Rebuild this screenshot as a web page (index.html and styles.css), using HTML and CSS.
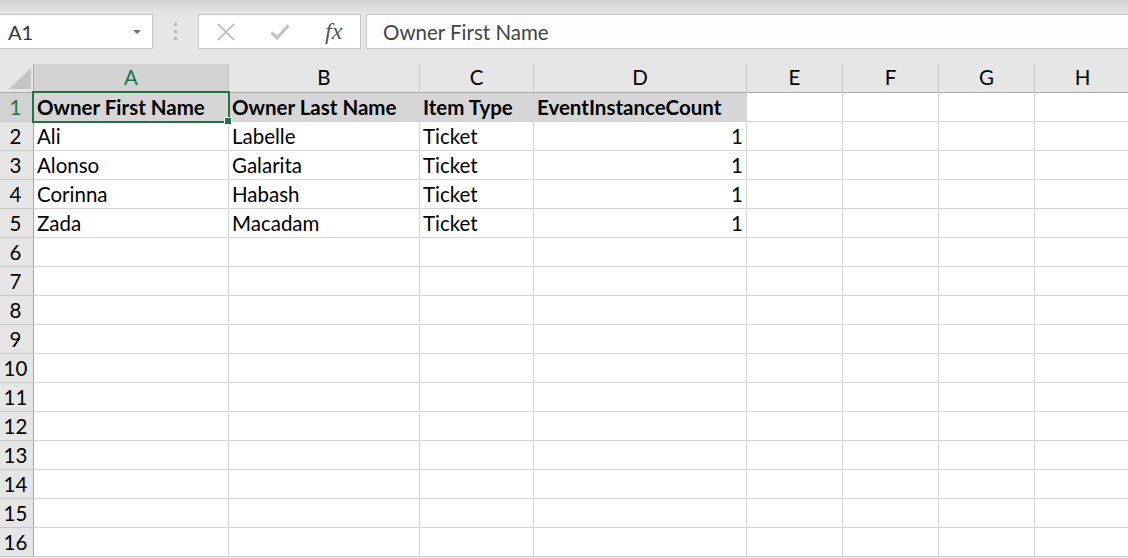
FILE: index.html
```html
<!DOCTYPE html>
<html lang="en">
<head>
  <meta charset="UTF-8">
  <title>Book1 - Excel</title>
  <link rel="stylesheet" href="styles.css">
</head>
<body>
  <div class="chrome-fade"></div>

  <!-- name box + formula bar -->
  <div class="formula-bar">
    <div class="name-box">
      <span>A1</span>
      <svg class="drop" width="8" height="4" viewBox="0 0 8 4"><path d="M0 0h8L4 4z" fill="#707070"/></svg>
    </div>
    <div class="grip"><i></i><i></i><i></i></div>
    <div class="fx-buttons">
      <svg class="btn" width="18" height="18" viewBox="0 0 18 18"><path d="M1 1L17 17M17 1L1 17" stroke="#b4b4b4" stroke-width="1.6" fill="none"/></svg>
      <svg class="btn" width="20" height="16" viewBox="0 0 20 16"><path d="M1.5 8.5L7 14L18.5 1.5" stroke="#c2c2c2" stroke-width="3" fill="none"/></svg>
      <span class="fx">fx</span>
    </div>
    <div class="formula-input">Owner First Name</div>
  </div>

  <!-- worksheet -->
  <div class="sheet">
    <div class="row">
      <div class="c corner"><svg width="22" height="21" viewBox="0 0 22 21"><path d="M22 0V21H0z" fill="#c4c4c4"/></svg></div>
      <div class="c ch sel">A</div>
      <div class="c ch">B</div>
      <div class="c ch">C</div>
      <div class="c ch">D</div>
      <div class="c ch">E</div>
      <div class="c ch">F</div>
      <div class="c ch">G</div>
      <div class="c ch">H</div>
    </div>
    <div class="row">
      <div class="c rh sel">1</div>
      <div class="c hd active">Owner First Name</div>
      <div class="c hd">Owner Last Name</div>
      <div class="c hd">Item Type</div>
      <div class="c hd">EventInstanceCount</div>
      <div class="c"></div><div class="c"></div><div class="c"></div><div class="c"></div>
    </div>
    <div class="row">
      <div class="c rh">2</div>
      <div class="c">Ali</div>
      <div class="c">Labelle</div>
      <div class="c">Ticket</div>
      <div class="c num">1</div>
      <div class="c"></div><div class="c"></div><div class="c"></div><div class="c"></div>
    </div>
    <div class="row">
      <div class="c rh">3</div>
      <div class="c">Alonso</div>
      <div class="c">Galarita</div>
      <div class="c">Ticket</div>
      <div class="c num">1</div>
      <div class="c"></div><div class="c"></div><div class="c"></div><div class="c"></div>
    </div>
    <div class="row">
      <div class="c rh">4</div>
      <div class="c">Corinna</div>
      <div class="c">Habash</div>
      <div class="c">Ticket</div>
      <div class="c num">1</div>
      <div class="c"></div><div class="c"></div><div class="c"></div><div class="c"></div>
    </div>
    <div class="row">
      <div class="c rh">5</div>
      <div class="c">Zada</div>
      <div class="c">Macadam</div>
      <div class="c">Ticket</div>
      <div class="c num">1</div>
      <div class="c"></div><div class="c"></div><div class="c"></div><div class="c"></div>
    </div>
    <div class="row"><div class="c rh">6</div><div class="c"></div><div class="c"></div><div class="c"></div><div class="c"></div><div class="c"></div><div class="c"></div><div class="c"></div><div class="c"></div></div>
    <div class="row"><div class="c rh">7</div><div class="c"></div><div class="c"></div><div class="c"></div><div class="c"></div><div class="c"></div><div class="c"></div><div class="c"></div><div class="c"></div></div>
    <div class="row"><div class="c rh">8</div><div class="c"></div><div class="c"></div><div class="c"></div><div class="c"></div><div class="c"></div><div class="c"></div><div class="c"></div><div class="c"></div></div>
    <div class="row"><div class="c rh">9</div><div class="c"></div><div class="c"></div><div class="c"></div><div class="c"></div><div class="c"></div><div class="c"></div><div class="c"></div><div class="c"></div></div>
    <div class="row"><div class="c rh">10</div><div class="c"></div><div class="c"></div><div class="c"></div><div class="c"></div><div class="c"></div><div class="c"></div><div class="c"></div><div class="c"></div></div>
    <div class="row"><div class="c rh">11</div><div class="c"></div><div class="c"></div><div class="c"></div><div class="c"></div><div class="c"></div><div class="c"></div><div class="c"></div><div class="c"></div></div>
    <div class="row"><div class="c rh">12</div><div class="c"></div><div class="c"></div><div class="c"></div><div class="c"></div><div class="c"></div><div class="c"></div><div class="c"></div><div class="c"></div></div>
    <div class="row"><div class="c rh">13</div><div class="c"></div><div class="c"></div><div class="c"></div><div class="c"></div><div class="c"></div><div class="c"></div><div class="c"></div><div class="c"></div></div>
    <div class="row"><div class="c rh">14</div><div class="c"></div><div class="c"></div><div class="c"></div><div class="c"></div><div class="c"></div><div class="c"></div><div class="c"></div><div class="c"></div></div>
    <div class="row"><div class="c rh">15</div><div class="c"></div><div class="c"></div><div class="c"></div><div class="c"></div><div class="c"></div><div class="c"></div><div class="c"></div><div class="c"></div></div>
    <div class="row"><div class="c rh">16</div><div class="c"></div><div class="c"></div><div class="c"></div><div class="c"></div><div class="c"></div><div class="c"></div><div class="c"></div><div class="c"></div></div>
  </div>
</body>
</html>
```

FILE: styles.css
```css
body {
  margin: 0;
  width: 1128px;
  height: 558px;
  overflow: hidden;
  background: #e6e6e6;
  font-family: Lato, "Liberation Sans", sans-serif;
  color: #000;
}

.chrome-fade {
  height: 14px;
  background: linear-gradient(#d0d0d0, #e6e6e6);
}

/* formula bar */
.formula-bar {
  display: flex;
  height: 35px;
  margin-bottom: 15px;
}
.name-box {
  width: 153px;
  box-sizing: border-box;
  border: 1px solid #c6c6c6;
  border-left: none;
  background: #fff;
  display: flex;
  align-items: center;
  justify-content: space-between;
  padding: 0 11px 0 8px;
  font-size: 20px;
  color: #333;
}
.grip {
  width: 45px;
  display: flex;
  flex-direction: column;
  align-items: center;
  justify-content: center;
  gap: 4px;
}
.grip i {
  width: 3px;
  height: 3px;
  background: #b8b8b8;
}
.fx-buttons {
  width: 163px;
  box-sizing: border-box;
  border: 1px solid #c6c6c6;
  background: #fff;
  display: flex;
  align-items: center;
  padding: 0 0 0 18px;
  gap: 35px;
}
.fx {
  font-family: "Liberation Serif", serif;
  font-style: italic;
  font-size: 24px;
  color: #555;
}
.formula-input {
  flex: 1;
  margin-left: 5px;
  border: 1px solid #c6c6c6;
  border-right: none;
  background: #fdfdfd;
  display: flex;
  align-items: center;
  padding-left: 16px;
  font-size: 20.5px;
  color: #444;
}

/* worksheet */
.sheet {
  background: #fff;
}
.row {
  display: grid;
  grid-template-columns: 34px 195px 191px 114px 213px 96px 96px 96px 96px;
}
.c {
  height: 29px;
  box-sizing: border-box;
  border-right: 1px solid #d4d4d4;
  border-bottom: 1px solid #d4d4d4;
  padding: 0 3px 4px 3px;
  display: flex;
  align-items: flex-end;
  font-size: 20.5px;
  line-height: 1;
  white-space: nowrap;
  overflow: hidden;
}
.num {
  justify-content: flex-end;
}
.corner {
  background: #e6e6e6;
  border-right-color: #a8a8a8;
  border-bottom-color: #a8a8a8;
  justify-content: flex-end;
  padding: 0 2px 3px 0;
}
.ch {
  background: #e6e6e6;
  border-right-color: #c8c8c8;
  border-bottom-color: #a8a8a8;
  justify-content: center;
  padding-bottom: 5px;
}
.rh {
  background: #e6e6e6;
  border-right-color: #a8a8a8;
  border-bottom-color: #c8c8c8;
  justify-content: center;
  padding: 0 2px 4px 0;
}
.ch.sel,
.rh.sel {
  background: #d2d2d2;
  color: #217346;
}
.hd {
  background: #d6d6d6;
  border-right-color: #d6d6d6;
  font-weight: bold;
}
.active {
  position: relative;
  overflow: visible;
}
.active::before {
  content: "";
  position: absolute;
  top: -2px;
  left: -2px;
  right: -2px;
  bottom: -2px;
  border: 2px solid #217346;
}
.active::after {
  content: "";
  position: absolute;
  right: -4px;
  bottom: -4px;
  width: 6px;
  height: 6px;
  background: #217346;
  border: 1px solid #fff;
}
```
